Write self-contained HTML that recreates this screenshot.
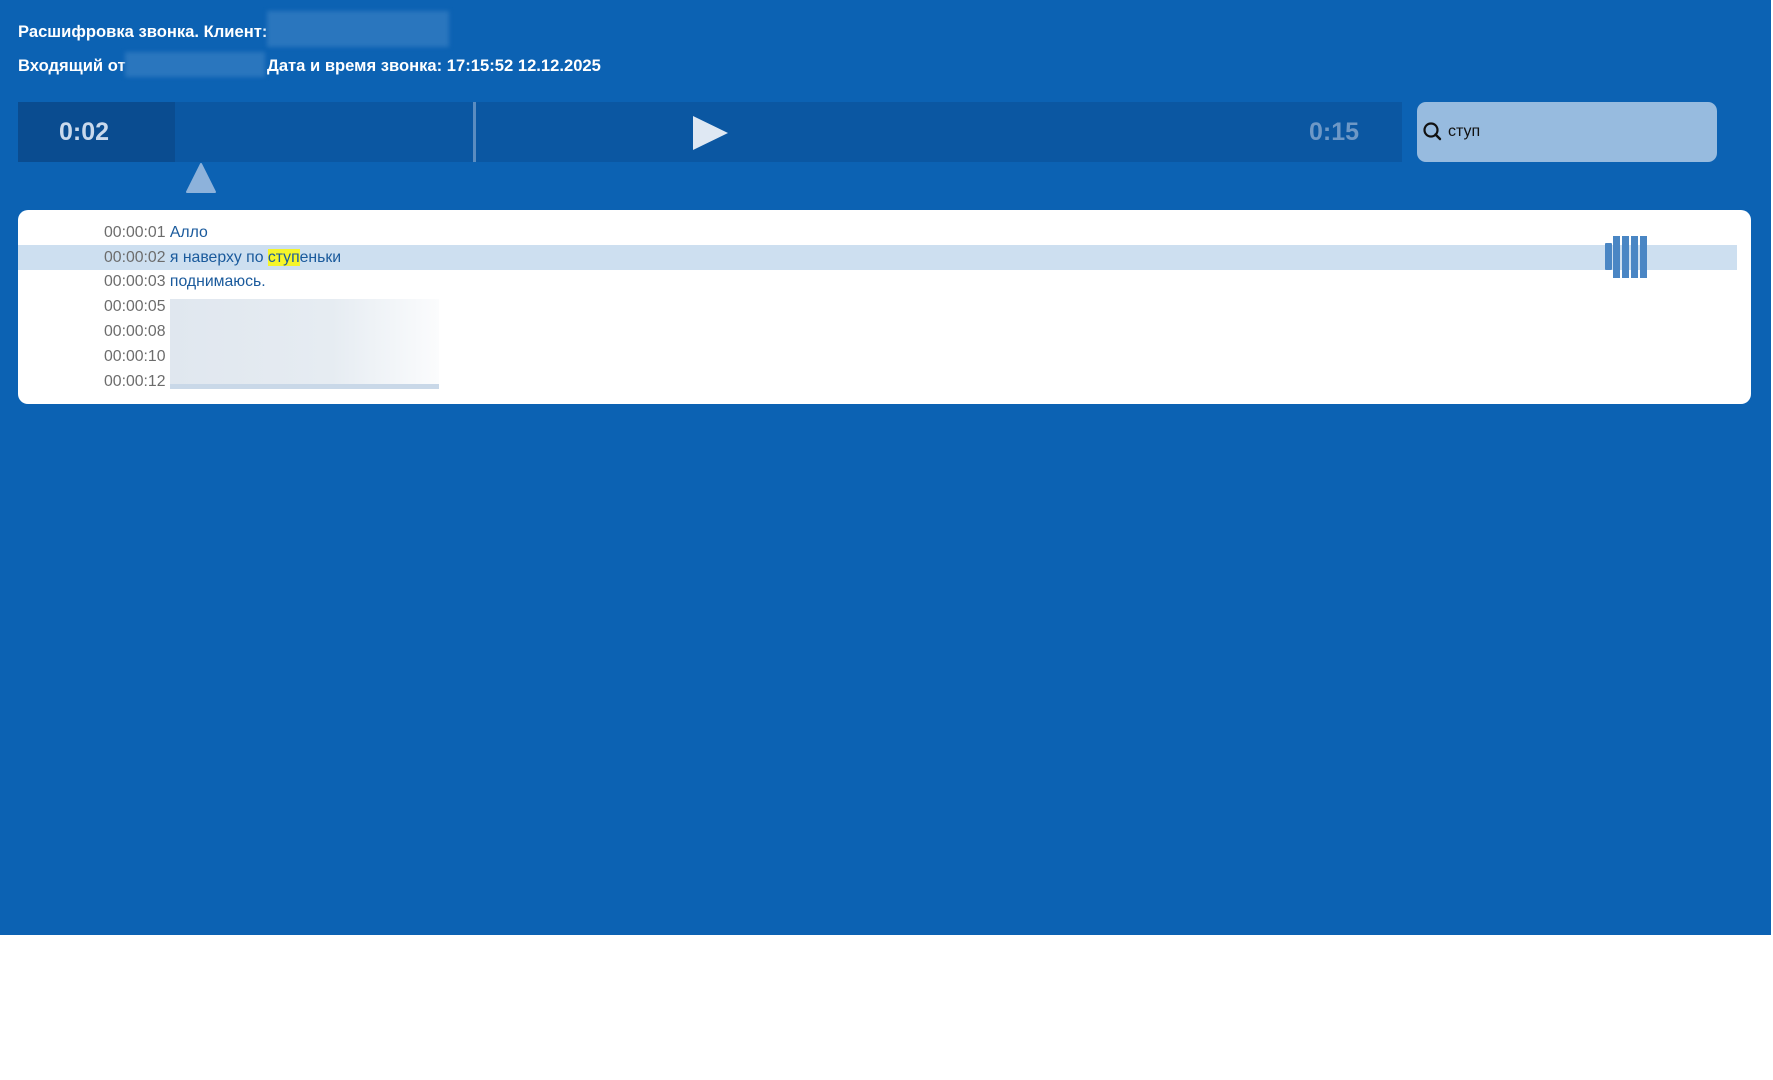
<!DOCTYPE html>
<html><head><meta charset="utf-8"><style>
*{margin:0;padding:0;box-sizing:border-box}
body{width:1773px;height:1080px;background:#fff;font-family:"Liberation Sans","DejaVu Sans",sans-serif;position:relative;overflow:hidden}
.bg{position:absolute;left:0;top:0;width:1771px;height:935px;background:#0c62b3}
.a{position:absolute}
.h{color:#fff;font-weight:bold;font-size:16.6px;white-space:nowrap}
.blur{position:absolute;background:#2a76be;filter:blur(2px)}
.row{position:absolute;left:104px;font-size:15.8px;white-space:nowrap;line-height:20px}
.ts{color:#6c6c6c}
.tx{color:#1a5a9c}
</style></head><body>
<div class="bg"></div>
<div class="a h" style="left:18px;top:22px">Расшифровка звонка. Клиент:</div>
<div class="blur" style="left:267px;top:11px;width:182px;height:36px"></div>
<div class="a h" style="left:18px;top:56px">Входящий от</div>
<div class="blur" style="left:125px;top:52px;width:140px;height:25px"></div>
<div class="a h" style="left:267px;top:56px">Дата и время звонка: 17:15:52 12.12.2025</div>

<div class="a" style="left:18px;top:102px;width:1384px;height:60px;background:#0b57a2"></div>
<div class="a" style="left:18px;top:102px;width:157px;height:60px;background:#0a4c90"></div>
<div class="a" style="left:473px;top:102px;width:3px;height:60px;background:#5b8cc0"></div>
<div class="a" style="left:59px;top:118px;color:#c9d9ec;font-size:25px;font-weight:bold">0:02</div>
<div class="a" style="left:1309px;top:118px;color:#6e98c6;font-size:25px;font-weight:bold">0:15</div>
<svg class="a" style="left:690px;top:114px" width="40" height="38"><polygon points="3,2 38,19 3,36" fill="#dfe8f3"/></svg>
<svg class="a" style="left:185px;top:162px" width="32" height="32"><polygon points="16,2 30,30 2,30" fill="#8db2db" stroke="#8db2db" stroke-width="2" stroke-linejoin="round"/></svg>

<div class="a" style="left:1417px;top:102px;width:300px;height:60px;background:#97bbdf;border-radius:9px"></div>
<svg class="a" style="left:1422px;top:121px" width="22" height="22"><circle cx="9" cy="9" r="6.5" fill="none" stroke="#111" stroke-width="2.2"/><line x1="13.5" y1="13.5" x2="18" y2="18" stroke="#111" stroke-width="2.4" stroke-linecap="round"/></svg>
<div class="a" style="left:1448px;top:123px;font-size:16px;color:#111">ступ</div>

<div class="a" style="left:18px;top:210px;width:1733px;height:194px;background:#fff;border-radius:10px"></div>
<div class="a" style="left:18px;top:245px;width:1719px;height:25px;background:#cddff0"></div>
<div class="row" style="top:223px"><span class="ts">00:00:01</span> <span class="tx">Алло</span></div>
<div class="row" style="top:248px"><span class="ts">00:00:02</span> <span class="tx">я наверху по <span style="background:#f5f52a">ступ</span>еньки</span></div>
<div class="row" style="top:272px"><span class="ts">00:00:03</span> <span class="tx">поднимаюсь.</span></div>
<div class="row" style="top:297px"><span class="ts">00:00:05</span></div>
<div class="row" style="top:322px"><span class="ts">00:00:08</span></div>
<div class="row" style="top:347px"><span class="ts">00:00:10</span></div>
<div class="row" style="top:372px"><span class="ts">00:00:12</span></div>
<div class="a" style="left:170px;top:299px;width:269px;height:90px;background:linear-gradient(90deg,#e0e7ef 0%,#e6ecf2 60%,#fbfcfd 100%)"></div>
<div class="a" style="left:170px;top:384px;width:269px;height:5px;background:#c9d8e8"></div>

<div class="a" style="left:1605px;top:243px;width:7px;height:27px;background:#4a86c4;border-radius:1px"></div>
<div class="a" style="left:1613px;top:236px;width:7px;height:42px;background:#4a86c4"></div>
<div class="a" style="left:1622px;top:236px;width:7px;height:42px;background:#4a86c4"></div>
<div class="a" style="left:1631px;top:236px;width:7px;height:42px;background:#4a86c4"></div>
<div class="a" style="left:1640px;top:236px;width:7px;height:42px;background:#4a86c4"></div>
</body></html>
